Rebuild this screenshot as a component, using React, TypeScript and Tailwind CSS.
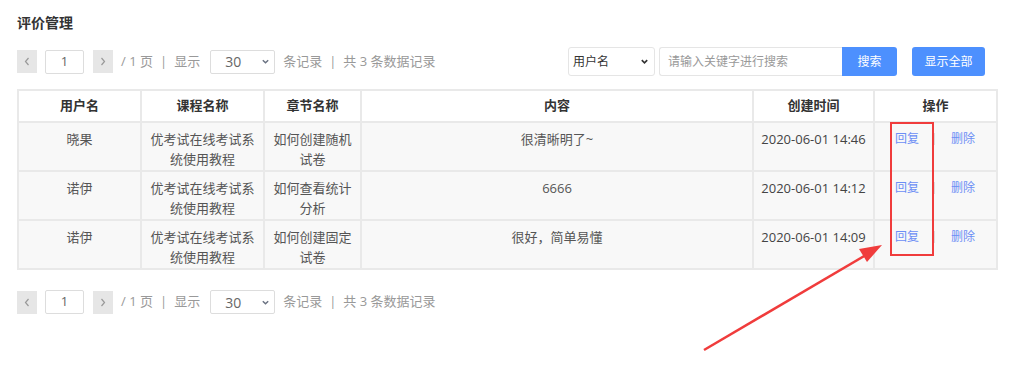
import React from 'react'

const rows = [
    { user: '晓果', course: '优考试在线考试系统使用教程', chapter: '如何创建随机试卷', content: '很清晰明了~', time: '2020-06-01 14:46' },
    { user: '诺伊', course: '优考试在线考试系统使用教程', chapter: '如何查看统计分析', content: '6666', time: '2020-06-01 14:12' },
    { user: '诺伊', course: '优考试在线考试系统使用教程', chapter: '如何创建固定试卷', content: '很好，简单易懂', time: '2020-06-01 14:09' },
]

const font = { fontFamily: '"Open Sans", "Noto Sans CJK SC", sans-serif' }

function Chevron() {
    return (
        <svg width="9" height="9" viewBox="0 0 10 10" className="text-gray-500">
            <path d="M2 3.5 L5 6.5 L8 3.5" fill="none" stroke="currentColor" strokeWidth="1.6" />
        </svg>
    )
}

function PageBtn({ dir }: { dir: 'prev' | 'next' }) {
    return (
        <button className="w-[20px] h-[23px] bg-[#e6e6e6] flex items-center justify-center">
            <svg width="6" height="9" viewBox="0 0 6 9">
                <path d={dir === 'prev' ? 'M4.5 1 L1.5 4.5 L4.5 8' : 'M1.5 1 L4.5 4.5 L1.5 8'} fill="none" stroke="#999" strokeWidth="1.2" />
            </svg>
        </button>
    )
}

function Pager() {
    return (
        <div className="flex items-center h-[24px] text-[13px] text-[#999]">
            <PageBtn dir="prev" />
            <div className="ml-[8px] w-[39px] h-[24px] border border-[#ddd] rounded-[2px] bg-white flex items-center justify-center text-[#666]">1</div>
            <div className="ml-[9px]"><PageBtn dir="next" /></div>
            <span className="ml-[8px]">/ 1 页</span>
            <span className="mx-[7px]">|</span>
            <span>显示</span>
            <div className="ml-[10px] w-[65px] h-[24px] border border-[#ddd] rounded-[2px] bg-white flex items-center justify-between pl-[14px] pr-[4px] text-[#666] text-[14px]">
                <span>30</span>
                <Chevron />
            </div>
            <span className="ml-[8px]">条记录</span>
            <span className="mx-[7px]">|</span>
            <span>共 3 条数据记录</span>
        </div>
    )
}

export default function App() {
    return (
        <div className="relative w-[1024px] h-[370px] bg-white overflow-hidden" style={font}>
            <div className="pl-[17px] pt-[13px] w-[996px] box-content">
                <h2 className="text-[14px] font-bold text-[#333] leading-[20px]">评价管理</h2>

                <div className="mt-[14px] flex items-center justify-between">
                    <Pager />
                    <div className="flex items-center mr-[28px]">
                        <div className="w-[87px] h-[29px] border border-[#e5e5e5] rounded-[3px] flex items-center justify-between pl-[4px] pr-[5px] text-[12px] text-[#333]">
                            <span>用户名</span>
                            <svg width="9" height="9" viewBox="0 0 10 10"><path d="M2 3.5 L5 6.5 L8 3.5" fill="none" stroke="#333" strokeWidth="1.8" /></svg>
                        </div>
                        <div className="ml-[4px] w-[183px] h-[29px] border border-[#e5e5e5] border-r-0 rounded-l-[3px] flex items-center px-[8px] text-[12px] text-[#999]">
                            请输入关键字进行搜索
                        </div>
                        <button className="w-[55px] h-[29px] bg-[#4d90fe] text-white text-[12px] rounded-r-[3px]">搜索</button>
                        <button className="ml-[15px] w-[73px] h-[29px] bg-[#4d90fe] text-white text-[12px] rounded-[3px]">显示全部</button>
                    </div>
                </div>

                <table className="mt-[13px] w-[979px] border-collapse text-[13px] text-[#555] table-fixed">
                    <colgroup>
                        <col className="w-[123px]" />
                        <col className="w-[123px]" />
                        <col className="w-[97px]" />
                        <col className="w-[392px]" />
                        <col className="w-[121px]" />
                        <col className="w-[123px]" />
                    </colgroup>
                    <thead>
                        <tr className="h-[32px] bg-white">
                            {['用户名', '课程名称', '章节名称', '内容', '创建时间', '操作'].map((h) => (
                                <th key={h} className="border-2 border-[#e9e9e9] font-bold text-[#333] text-[13px]">{h}</th>
                            ))}
                        </tr>
                    </thead>
                    <tbody>
                        {rows.map((r, i) => (
                            <tr key={i} className="h-[49px] bg-[#f8f8f8] align-top">
                                <td className="border-2 border-[#e9e9e9] text-center pt-[6px] leading-[20px]">{r.user}</td>
                                <td className="border-2 border-[#e9e9e9] text-center pt-[6px] px-[5px] leading-[20px]">{r.course}</td>
                                <td className="border-2 border-[#e9e9e9] text-center pt-[6px] px-[5px] leading-[20px]">{r.chapter}</td>
                                <td className="border-2 border-[#e9e9e9] text-center pt-[6px] leading-[20px]">{r.content}</td>
                                <td className="border-2 border-[#e9e9e9] text-center pt-[6px] leading-[20px] text-[13px] text-[#444]">{r.time}</td>
                                <td className="border-2 border-[#e9e9e9] pt-[6px] leading-[20px]">
                                    <div className="flex items-center pl-[20px] text-[12px] text-[#6c8ef5]">
                                        <span>回复</span>
                                        <span className="ml-[15px] w-px h-[12px] bg-[#ddd]" />
                                        <span className="ml-[16px]">删除</span>
                                    </div>
                                </td>
                            </tr>
                        ))}
                    </tbody>
                </table>

                <div className="mt-[20px]">
                    <Pager />
                </div>
            </div>

            <div className="absolute left-[890px] top-[122px] w-[44px] h-[134px] border-2 border-[#f03c3c]" />
            <svg className="absolute left-0 top-0" width="1024" height="370" viewBox="0 0 1024 370">
                <line x1="704" y1="350" x2="866" y2="255" stroke="#f03c3c" strokeWidth="2.5" />
                <polygon points="882,245 859,249 867,262" fill="#f03c3c" />
            </svg>
        </div>
    )
}
